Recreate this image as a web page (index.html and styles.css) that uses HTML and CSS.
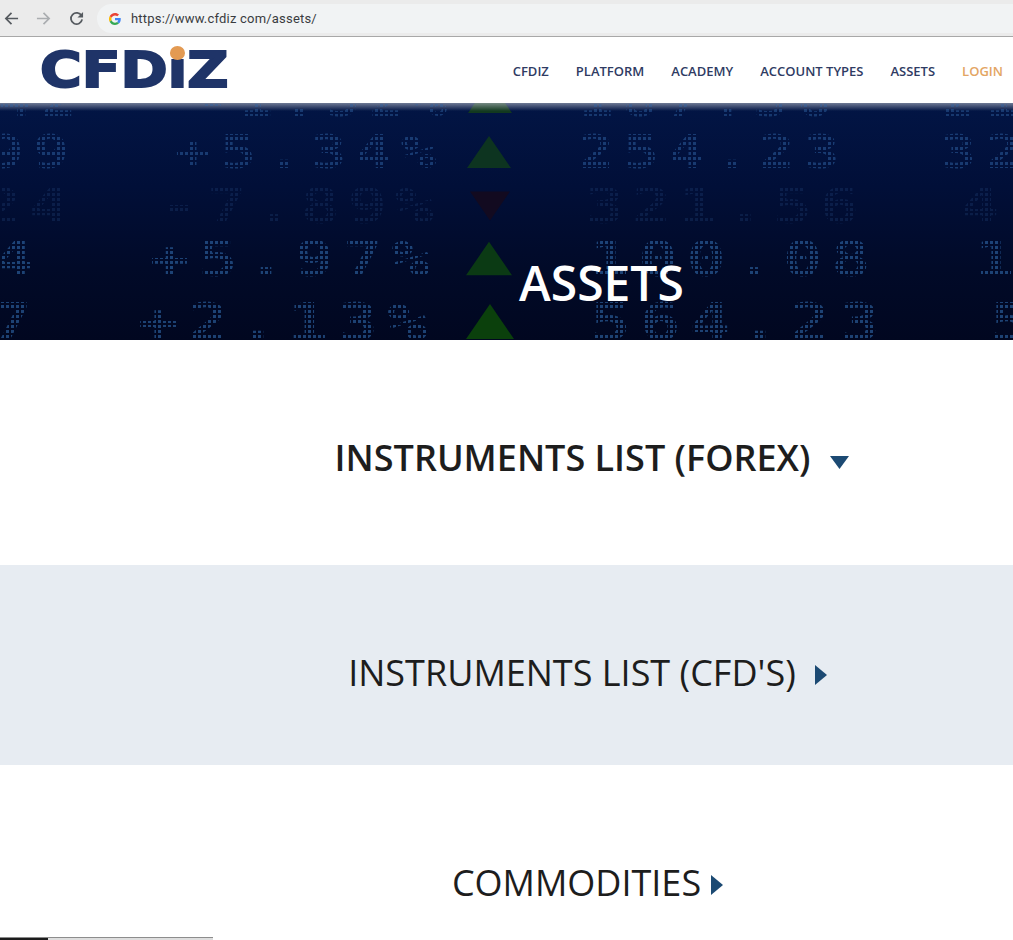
FILE: index.html
```html
<!DOCTYPE html>
<html lang="en">
<head>
<meta charset="utf-8">
<title>Assets - CFDIZ</title>
<link rel="stylesheet" href="styles.css">
</head>
<body>
<div class="browser-bar">
  <svg class="nav-icon" viewBox="0 0 16 16"><path d="M15 8H2.5M8 2 2 8l6 6" fill="none" stroke="#555a5f" stroke-width="1.8"/></svg>
  <svg class="nav-icon" viewBox="0 0 16 16"><path d="M1 8h12.5M8 2l6 6-6 6" fill="none" stroke="#aaadb0" stroke-width="1.8"/></svg>
  <svg class="nav-icon" viewBox="0 0 16 16"><path d="M13.4 5.2A6 6 0 1 0 14 9" fill="none" stroke="#555a5f" stroke-width="1.9"/><path d="M15 1v6H9z" fill="#555a5f"/></svg>
  <div class="address">
    <svg class="g-logo" viewBox="0 0 48 48"><path fill="#ea4335" d="M24 9.500c3.500 0 6.700 1.200 9.200 3.600l6.900-6.900C35.900 2.400 30.500 0 24 0 14.600 0 6.500 5.400 2.600 13.200l8 6.200C12.400 13.700 17.700 9.500 24 9.500z"/><path fill="#4285f4" d="M47 24.500c0-1.600-.1-3.100-.4-4.500H24v9h12.900c-.6 3-2.200 5.500-4.700 7.200l7.700 6C44.400 38 47 31.800 47 24.500z"/><path fill="#fbbc05" d="M10.500 28.600a14.500 14.500 0 0 1 0-9.200l-8-6.200a24 24 0 0 0 0 21.600z"/><path fill="#34a853" d="M24 48c6.500 0 11.900-2.100 15.900-5.800l-7.700-6c-2.200 1.500-4.900 2.300-8.200 2.300-6.300 0-11.600-4.200-13.500-9.900l-8 6.200C6.500 42.600 14.600 48 24 48z"/></svg>
    <span class="url">https://www.cfdiz com/assets/</span>
  </div>
</div>

<header class="site-header">
  <a class="logo"><span class="logo-text">CFD<span class="logo-i">ı<i class="logo-dot"></i></span>Z</span></a>
  <nav class="main-nav">
    <a>CFDIZ</a>
    <a>PLATFORM</a>
    <a>ACADEMY</a>
    <a>ACCOUNT TYPES</a>
    <a>ASSETS</a>
    <a class="login">LOGIN</a>
  </nav>
</header>

<section class="hero">
  <div class="ticker">
    <div class="tick-row r1"><span class="edge">42</span><span></span><span>-1.52%</span><span></span><svg class="tri" viewBox="0 0 44 32"><path d="M22 0 44 32H0z" fill="#12391f"/></svg><span></span><span>187.36</span><span></span><span>21</span></div>
    <div class="tick-row r2"><span class="edge">99</span><span></span><span>+5.34%</span><span></span><svg class="tri" viewBox="0 0 44 32"><path d="M22 0 44 32H0z" fill="#0d3420"/></svg><span></span><span>254.23</span><span></span><span>32</span></div>
    <div class="tick-row r3"><span class="edge">24</span><span></span><span>-7.89%</span><span></span><svg class="tri" viewBox="0 0 44 32"><path d="M0 0h44L22 32z" fill="#120a20"/></svg><span></span><span>321.56</span><span></span><span>4</span></div>
    <div class="tick-row r4"><span class="edge">4</span><span></span><span>+5.97%</span><span></span><svg class="tri" viewBox="0 0 44 32"><path d="M22 0 44 32H0z" fill="#0b3a14"/></svg><span></span><span>100.08</span><span></span><span>1</span></div>
    <div class="tick-row r5"><span class="edge">7</span><span></span><span>+2.13%</span><span></span><svg class="tri" viewBox="0 0 44 32"><path d="M22 0 44 32H0z" fill="#0b400c"/></svg><span></span><span>564.23</span><span></span><span>5</span></div>
  </div>
  <h1 class="hero-title">ASSETS</h1>
</section>

<section class="list-section forex">
  <h2 class="list-title strong">INSTRUMENTS LIST (FOREX)</h2>
  <svg class="caret-down" viewBox="0 0 19 13"><path d="M0 0h19L9.500 13z"/></svg>
</section>
<section class="list-section cfd">
  <h2 class="list-title">INSTRUMENTS LIST (CFD'S)</h2>
  <svg class="caret-right" viewBox="0 0 12 20"><path d="M0 0l12 10L0 20z"/></svg>
</section>
<section class="list-section commodities">
  <h2 class="list-title">COMMODITIES</h2>
  <svg class="caret-right" viewBox="0 0 12 20"><path d="M0 0l12 10L0 20z"/></svg>
</section>

<div class="bottom-bar"><span class="seg-dark"></span><span class="seg-grey"></span></div>
</body>
</html>
```
FILE: styles.css
```css
* { box-sizing: border-box; }
html, body { margin: 0; padding: 0; height: 940px; overflow: hidden; background: #fff; }
body { font-family: "Open Sans", "Liberation Sans", sans-serif; color: #1d1d1d; }

.browser-bar {
  height: 37px;
  display: flex;
  align-items: center;
  padding: 4px 0 3px 4px;
  background: #ebebeb;
  border-bottom: 1px solid #a8a8a8;
}
.nav-icon { width: 15px; height: 15px; margin-right: 17px; flex: none; }
.nav-icon:nth-child(2) { margin-right: 18px; }
.nav-icon:nth-child(3) { margin-right: 13px; }
.address {
  flex: 1;
  height: 29px;
  display: flex;
  align-items: center;
  padding-left: 12px;
  background: #f1f3f4;
  border-radius: 15px 0 0 15px;
}
.g-logo { width: 12px; height: 12px; margin-right: 10px; }
.url { font-family: Roboto, "Liberation Sans", sans-serif; font-size: 13px; color: #3a3c3f; letter-spacing: .2px; }

.site-header {
  height: 66px;
  display: flex;
  align-items: center;
  justify-content: space-between;
  padding: 0 10px 0 40px;
  background: #fff;
}
.logo { display: block; width: 186px; margin-top: 2px; }
.logo-text {
  display: inline-block;
  font-family: "DejaVu Sans", sans-serif;
  font-weight: 700;
  font-size: 49px;
  line-height: 52px;
  color: #1f3468;
  white-space: nowrap;
  -webkit-text-stroke: 2px #1f3468;
  transform: scaleX(1.16);
  transform-origin: left center;
}
.logo-i { position: relative; display: inline-block; }
.logo-dot {
  position: absolute;
  left: 2px;
  top: 1px;
  width: 13px;
  height: 14px;
  border-radius: 50%;
  background: #e39a52;
}
.main-nav { display: flex; gap: 27px; margin-top: 1px; }
.main-nav a { font-size: 13px; font-weight: 600; color: #2f3b63; line-height: 18px; }
.main-nav .login { color: #e3a563; }

.hero {
  position: relative;
  height: 237px;
  overflow: hidden;
  background: linear-gradient(#021545 0%, #010f38 35%, #010a28 70%, #010720 100%);
}
.hero::before {
  content: "";
  position: absolute;
  inset: 0 0 auto;
  height: 8px;
  background: linear-gradient(rgba(200, 205, 215, .55), rgba(200, 205, 215, 0));
}
.ticker {
  display: grid;
  grid-template-rows: 14px 19px 32px 22px 32px 18px 37px 26px 37px;
  height: 237px;
  font-family: "DejaVu Sans Mono", monospace;
}
.tick-row {
  display: grid;
  grid-auto-rows: 100%;
  align-items: center;
  white-space: nowrap;
  min-width: 0;
}
.tick-row span {
  display: block;
  line-height: 1;
  font-weight: 700;
  transform: scaleX(1.3);
  transform-origin: left center;
  -webkit-mask-image:
    repeating-linear-gradient(90deg, #000 0 2.3px, transparent 2.3px 3.85px),
    repeating-linear-gradient(0deg, #000 0 3px, transparent 3px 5px);
  -webkit-mask-composite: source-in;
  mask-image:
    repeating-linear-gradient(90deg, #000 0 2.3px, transparent 2.3px 3.85px),
    repeating-linear-gradient(0deg, #000 0 3px, transparent 3px 5px);
  mask-composite: intersect;
}
.tick-row .edge { text-align: right; transform-origin: right center; }
.tick-row .tri { display: block; width: 100%; height: 100%; }

.r1 {
  grid-row: 1;
  grid-template-columns: 85px 110px 255px 18px 44px 67px 272px 90px 73px;
  overflow: hidden;
  align-items: end;
  color: rgba(48, 100, 165, .45);
  font-size: 44px;
  letter-spacing: 7px;
}
.r1 span { line-height: 33px; }
.tick-row.r1 .tri { height: 32px; margin-bottom: 4px; }
.r2 {
  grid-row: 3;
  grid-template-columns: 78px 97px 270px 22px 44px 67px 272px 90px 73px;
  color: rgba(48, 100, 165, .5);
  font-size: 46px;
  letter-spacing: 7px;
}
.r3 {
  grid-row: 5;
  grid-template-columns: 60px 100px 285px 25px 40px 75px 275px 100px 53px;
  color: rgba(48, 90, 150, .22);
  font-size: 50px;
  letter-spacing: 6px;
}
.r4 {
  grid-row: 7;
  grid-template-columns: 42px 108px 290px 26px 46px 78px 290px 95px 38px;
  color: rgba(48, 105, 170, .6);
  font-size: 50px;
  letter-spacing: 7px;
}
.r5 {
  grid-row: 9;
  grid-template-columns: 30px 108px 302px 26px 48px 76px 305px 95px 23px;
  color: rgba(48, 105, 170, .6);
  font-size: 52px;
  letter-spacing: 7px;
}
.hero-title {
  position: absolute;
  left: 519px;
  top: 147px;
  margin: 0;
  font-size: 48px;
  font-weight: 600;
  line-height: 66px;
  color: #fff;
}

.list-section { display: flex; align-items: flex-start; justify-content: center; padding-left: 162px; }
.list-title { margin: 0; font-size: 36px; font-weight: 400; line-height: 49px; color: #1d1d1d; }
.list-title.strong { font-weight: 600; }
.forex { height: 225px; padding-top: 93px; padding-left: 171px; background: #fff; }
.cfd { height: 200px; padding-top: 83px; background: #e7ecf2; }
.commodities { height: 172px; padding-top: 93px; background: #fff; }
.caret-down, .caret-right { fill: #1c4a73; flex: none; }
.caret-down { width: 19px; height: 13px; margin: 23px 0 0 20px; }
.caret-right { width: 12px; height: 20px; margin: 17px 0 0 19px; }
.commodities .caret-right { margin-left: 10px; }

.bottom-bar { height: 3px; display: flex; }
.seg-dark { width: 48px; height: 3px; background: linear-gradient(#8a8a8a 1px, #1c1c1c 1px); }
.seg-grey { width: 165px; height: 3px; background: linear-gradient(#8d8d8d 1px, #dedede 1px); }
```
